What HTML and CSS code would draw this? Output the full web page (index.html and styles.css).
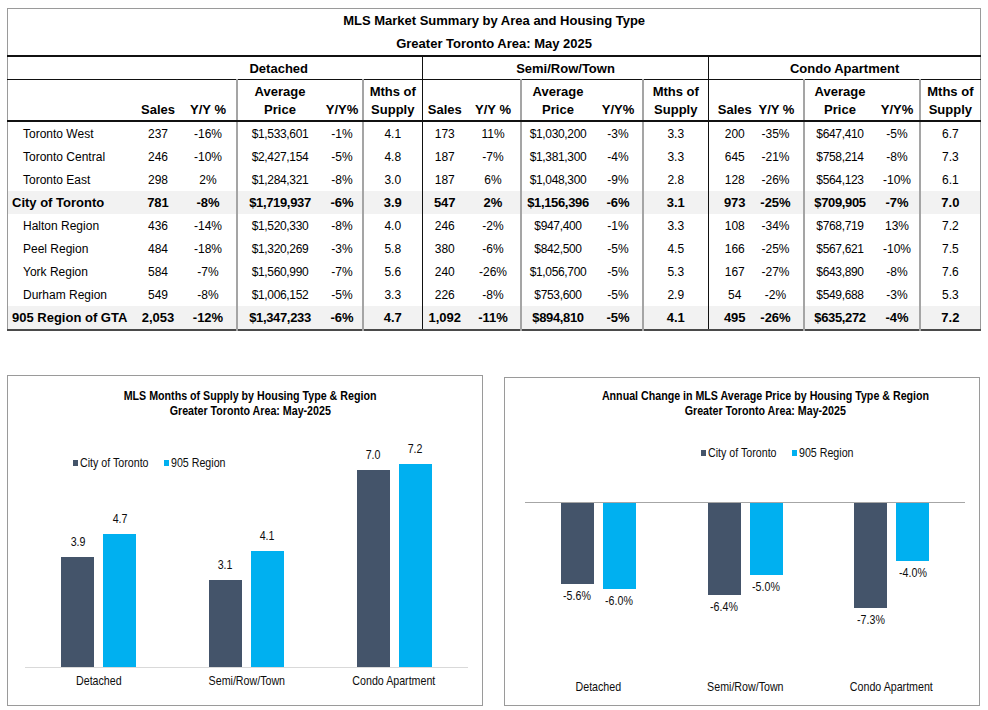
FILE: index.html
```html
<!DOCTYPE html>
<html>
<head>
<meta charset="utf-8">
<link rel="stylesheet" href="styles.css">
</head>
<body>
<div class="page">
  <table class="summary">
    <colgroup>
      <col style="width:128px"><col style="width:45px"><col style="width:56px"><col style="width:86px"><col style="width:40px"><col style="width:60px">
      <col style="width:44px"><col style="width:54px"><col style="width:74px"><col style="width:48px"><col style="width:66px">
      <col style="width:50px"><col style="width:45px"><col style="width:72px"><col style="width:44px"><col style="width:61px">
    </colgroup>
    <thead>
      <tr class="t1"><th colspan="16">MLS Market Summary by Area and Housing Type</th></tr>
      <tr class="t2"><th colspan="16">Greater Toronto Area: May 2025</th></tr>
      <tr class="sec"><th></th><th colspan="5" class="k">Detached</th><th colspan="5" class="k">Semi/Row/Town</th><th colspan="5">Condo Apartment</th></tr>
      <tr class="hdr">
        <th></th><th>Sales</th><th class="g">Y/Y %</th><th>Average<br>Price</th><th class="g">Y/Y%</th><th class="k">Mths of<br>Supply</th>
        <th>Sales</th><th class="g">Y/Y %</th><th>Average<br>Price</th><th class="g">Y/Y%</th><th class="k">Mths of<br>Supply</th>
        <th class="cs">Sales</th><th class="g cy">Y/Y %</th><th>Average<br>Price</th><th class="g">Y/Y%</th><th>Mths of<br>Supply</th>
      </tr>
    </thead>
    <tbody>
      <tr><td class="lbl">Toronto West</td><td>237</td><td class="g">-16%</td><td class="p">$1,533,601</td><td class="g">-1%</td><td class="k">4.1</td><td>173</td><td class="g">11%</td><td class="p">$1,030,200</td><td class="g">-3%</td><td class="k">3.3</td><td class="cs">200</td><td class="g cy">-35%</td><td class="p">$647,410</td><td class="g">-5%</td><td>6.7</td></tr>
      <tr><td class="lbl">Toronto Central</td><td>246</td><td class="g">-10%</td><td class="p">$2,427,154</td><td class="g">-5%</td><td class="k">4.8</td><td>187</td><td class="g">-7%</td><td class="p">$1,381,300</td><td class="g">-4%</td><td class="k">3.3</td><td class="cs">645</td><td class="g cy">-21%</td><td class="p">$758,214</td><td class="g">-8%</td><td>7.3</td></tr>
      <tr><td class="lbl">Toronto East</td><td>298</td><td class="g">2%</td><td class="p">$1,284,321</td><td class="g">-8%</td><td class="k">3.0</td><td>187</td><td class="g">6%</td><td class="p">$1,048,300</td><td class="g">-9%</td><td class="k">2.8</td><td class="cs">128</td><td class="g cy">-26%</td><td class="p">$564,123</td><td class="g">-10%</td><td>6.1</td></tr>
      <tr class="tot"><td class="lbl">City of Toronto</td><td>781</td><td class="g">-8%</td><td class="p">$1,719,937</td><td class="g">-6%</td><td class="k">3.9</td><td>547</td><td class="g">2%</td><td class="p">$1,156,396</td><td class="g">-6%</td><td class="k">3.1</td><td class="cs">973</td><td class="g cy">-25%</td><td class="p">$709,905</td><td class="g">-7%</td><td>7.0</td></tr>
      <tr><td class="lbl">Halton Region</td><td>436</td><td class="g">-14%</td><td class="p">$1,520,330</td><td class="g">-8%</td><td class="k">4.0</td><td>246</td><td class="g">-2%</td><td class="p">$947,400</td><td class="g">-1%</td><td class="k">3.3</td><td class="cs">108</td><td class="g cy">-34%</td><td class="p">$768,719</td><td class="g">13%</td><td>7.2</td></tr>
      <tr><td class="lbl">Peel Region</td><td>484</td><td class="g">-18%</td><td class="p">$1,320,269</td><td class="g">-3%</td><td class="k">5.8</td><td>380</td><td class="g">-6%</td><td class="p">$842,500</td><td class="g">-5%</td><td class="k">4.5</td><td class="cs">166</td><td class="g cy">-25%</td><td class="p">$567,621</td><td class="g">-10%</td><td>7.5</td></tr>
      <tr><td class="lbl">York Region</td><td>584</td><td class="g">-7%</td><td class="p">$1,560,990</td><td class="g">-7%</td><td class="k">5.6</td><td>240</td><td class="g">-26%</td><td class="p">$1,056,700</td><td class="g">-5%</td><td class="k">5.3</td><td class="cs">167</td><td class="g cy">-27%</td><td class="p">$643,890</td><td class="g">-8%</td><td>7.6</td></tr>
      <tr><td class="lbl">Durham Region</td><td>549</td><td class="g">-8%</td><td class="p">$1,006,152</td><td class="g">-5%</td><td class="k">3.3</td><td>226</td><td class="g">-8%</td><td class="p">$753,600</td><td class="g">-5%</td><td class="k">2.9</td><td class="cs">54</td><td class="g cy">-2%</td><td class="p">$549,688</td><td class="g">-3%</td><td>5.3</td></tr>
      <tr class="tot"><td class="lbl">905 Region of GTA</td><td>2,053</td><td class="g">-12%</td><td class="p">$1,347,233</td><td class="g">-6%</td><td class="k">4.7</td><td>1,092</td><td class="g">-11%</td><td class="p">$894,810</td><td class="g">-5%</td><td class="k">4.1</td><td class="cs">495</td><td class="g cy">-26%</td><td class="p">$635,272</td><td class="g">-4%</td><td>7.2</td></tr>
    </tbody>
  </table>

  <div class="charts">
    <section class="chart chart-left">
      <div class="ctitle ctitle-left"><span class="nw">MLS Months of Supply by Housing Type &amp; Region</span><br><span class="nw">Greater Toronto Area: May-2025</span></div>
      <div class="legend legend-left">
        <div class="li li-first"><span class="sw dark"></span><span class="ltxt">City of Toronto</span></div>
        <div class="li"><span class="sw blue"></span><span class="ltxt">905 Region</span></div>
      </div>
      <div class="plot">
        <div class="grp">
          <div class="barcol"><span class="val">3.9</span><span class="bar dark" style="height:110px"></span></div>
          <div class="barcol"><span class="val">4.7</span><span class="bar blue" style="height:133px"></span></div>
        </div>
        <div class="grp">
          <div class="barcol"><span class="val">3.1</span><span class="bar dark" style="height:87px"></span></div>
          <div class="barcol"><span class="val">4.1</span><span class="bar blue" style="height:116px"></span></div>
        </div>
        <div class="grp">
          <div class="barcol"><span class="val">7.0</span><span class="bar dark" style="height:197px"></span></div>
          <div class="barcol"><span class="val">7.2</span><span class="bar blue" style="height:203px"></span></div>
        </div>
      </div>
      <div class="cats cats-left"><span>Detached</span><span>Semi/Row/Town</span><span>Condo Apartment</span></div>
    </section>

    <section class="chart chart-right">
      <div class="ctitle ctitle-right"><span class="nw">Annual Change in MLS Average Price by Housing Type &amp; Region</span><br><span class="nw">Greater Toronto Area: May-2025</span></div>
      <div class="legend legend-right">
        <div class="li li-first"><span class="sw dark"></span><span class="ltxt">City of Toronto</span></div>
        <div class="li"><span class="sw blue"></span><span class="ltxt">905 Region</span></div>
      </div>
      <div class="plot-neg">
        <div class="grp">
          <div class="barcol"><span class="bar dark" style="height:81px"></span><span class="val-neg">-5.6%</span></div>
          <div class="barcol"><span class="bar blue" style="height:86px"></span><span class="val-neg">-6.0%</span></div>
        </div>
        <div class="grp">
          <div class="barcol"><span class="bar dark" style="height:92px"></span><span class="val-neg">-6.4%</span></div>
          <div class="barcol"><span class="bar blue" style="height:72px"></span><span class="val-neg">-5.0%</span></div>
        </div>
        <div class="grp">
          <div class="barcol"><span class="bar dark" style="height:105px"></span><span class="val-neg">-7.3%</span></div>
          <div class="barcol"><span class="bar blue" style="height:58px"></span><span class="val-neg">-4.0%</span></div>
        </div>
      </div>
      <div class="cats cats-right"><span>Detached</span><span>Semi/Row/Town</span><span>Condo Apartment</span></div>
    </section>
  </div>
</div>
</body>
</html>
```
FILE: styles.css
```css
html, body {
  margin: 0;
  padding: 0;
  background: #fff;
  color: #000;
}
.page {
  padding: 8px 0 0 7px;
  font-family: "Liberation Sans", Arial, sans-serif;
}

/* ---------- summary table ---------- */
.summary {
  width: 973px;
  table-layout: fixed;
  border-collapse: collapse;
  border: 1px solid #9a9a9a;
  border-bottom: 2px solid #4a4a4a;
  font-size: 12px;
}
.summary th,
.summary td {
  padding: 0;
  text-align: center;
  white-space: nowrap;
}
.summary th {
  font-weight: bold;
  font-size: 13px;
}
.t1 th {
  height: 23px;
  vertical-align: middle;
  line-height: 16px;
}
.t2 th {
  height: 23px;
  line-height: 16px;
  border-bottom: 2px solid #111;
}
.sec th {
  height: 22px;
  border-bottom: 1px solid #111;
}
.hdr th {
  height: 39px;
  line-height: 18px;
  vertical-align: bottom;
  padding-bottom: 1px;
  border-bottom: 2px solid #111;
}
.summary tbody td {
  height: 23px;
  line-height: 14px;
}
.summary .g {
  border-right: 2px solid #a5a5a5;
}
.summary .k {
  border-right: 1px solid #111;
}
.summary .cs {
  padding-left: 2px;
}
.summary .cy {
  padding-right: 10px;
}
.summary .p {
  letter-spacing: -0.35px;
}
.summary .lbl {
  text-align: left;
  padding-left: 15px;
}
.summary .tot td {
  background: #f2f2f2;
  font-weight: bold;
  font-size: 13px;
}
.summary .tot .lbl {
  padding-left: 4px;
}

/* ---------- charts ---------- */
.charts {
  display: flex;
  align-items: flex-start;
  gap: 21px;
  margin-top: 44px;
}
.chart {
  position: relative;
  box-sizing: border-box;
  width: 476px;
  border: 1px solid #9a9a9a;
  font-family: "Liberation Sans", Arial, sans-serif;
  font-size: 13px;
  color: #0d0d0d;
  display: flex;
  flex-direction: column;
}
.chart-left {
  height: 331px;
}
.chart-right {
  height: 329px;
  margin-top: 2px;
}
.ctitle {
  font-weight: bold;
  line-height: 15px;
  text-align: center;
  color: #000;
}
.nw {
  display: inline-block;
  white-space: nowrap;
  transform: scaleX(0.82);
}
.ctitle-left {
  padding-top: 12px;
  padding-left: 10px;
}
.ctitle-right {
  padding-top: 10px;
  padding-left: 46px;
}
.legend {
  position: absolute;
  display: flex;
  align-items: center;
  line-height: 15px;
}
.legend-left {
  left: 65px;
  top: 79px;
}
.legend-right {
  left: 196px;
  top: 67px;
}
.li {
  display: flex;
  align-items: center;
  white-space: nowrap;
}
.li-first {
  width: 91px;
}
.sw {
  width: 5px;
  height: 6px;
  margin-right: 2px;
  flex: none;
}
.ltxt {
  display: inline-block;
  transform: scaleX(0.82);
  transform-origin: left center;
}
.dark {
  background: #44546a;
}
.blue {
  background: #00b0f0;
}
.plot {
  height: 249px;
  margin: 0 14px 0 17px;
  display: flex;
  align-items: flex-end;
  border-bottom: 1px solid #d9d9d9;
}
.plot-neg {
  height: 170px;
  margin: 84px 14px 0 20px;
  display: flex;
  align-items: flex-start;
  border-top: 1px solid #a6a6a6;
}
.grp {
  flex: 1;
  display: flex;
  justify-content: center;
  gap: 9px;
}
.plot .grp {
  align-items: flex-end;
}
.plot-neg .grp {
  align-items: flex-start;
}
.barcol {
  width: 33px;
  display: flex;
  flex-direction: column;
  align-items: center;
}
.bar {
  display: block;
  width: 33px;
}
.val,
.val-neg {
  line-height: 15px;
  white-space: nowrap;
  transform: scaleX(0.82);
}
.val {
  margin-bottom: 8px;
}
.val-neg {
  margin-top: 4px;
}
.cats {
  display: flex;
  line-height: 15px;
}
.cats span {
  flex: 1;
  text-align: center;
  white-space: nowrap;
  transform: scaleX(0.82);
}
.cats-left {
  margin: 5px 14px 0 17px;
}
.cats-right {
  margin: 6px 14px 0 20px;
}
```
